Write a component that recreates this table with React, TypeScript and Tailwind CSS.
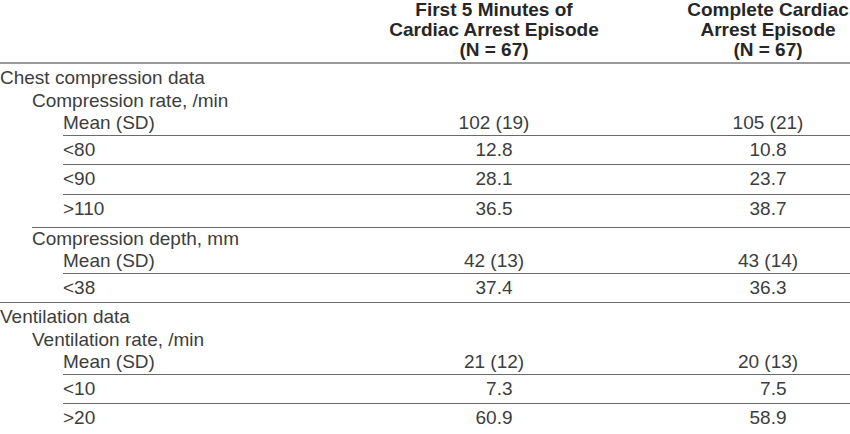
import React from "react";

type DataRow = { label: string; a: string; b: string };
type Subsection = { title: string; mean: DataRow; rows: DataRow[] };
type Section = { title: string; subsections: Subsection[] };

const FS = "\u2007";

const sections: Section[] = [
  {
    title: "Chest compression data",
    subsections: [
      {
        title: "Compression rate, /min",
        mean: { label: "Mean (SD)", a: "102 (19)", b: "105 (21)" },
        rows: [
          { label: "<80", a: "12.8", b: "10.8" },
          { label: "<90", a: "28.1", b: "23.7" },
          { label: ">110", a: "36.5", b: "38.7" },
        ],
      },
      {
        title: "Compression depth, mm",
        mean: { label: "Mean (SD)", a: "42 (13)", b: "43 (14)" },
        rows: [{ label: "<38", a: "37.4", b: "36.3" }],
      },
    ],
  },
  {
    title: "Ventilation data",
    subsections: [
      {
        title: "Ventilation rate, /min",
        mean: { label: "Mean (SD)", a: "21 (12)", b: "20 (13)" },
        rows: [
          { label: "<10", a: FS + "7.3", b: FS + "7.5" },
          { label: ">20", a: "60.9", b: "58.9" },
        ],
      },
    ],
  },
];

// label column + two value columns, the gap between them is a fixed spacer
const Cells = ({ label, a, b }: DataRow) => (
  <>
    <div className="flex-1 whitespace-nowrap">{label}</div>
    <div className="w-[210px] text-center whitespace-nowrap">{a}</div>
    <div className="w-[87px]" />
    <div className="w-[164px] text-center whitespace-nowrap">{b}</div>
  </>
);

export default function App() {
  return (
    <div
      className="w-[850px] h-[434px] overflow-hidden bg-white text-[19px] text-[#3d3d3d]"
      style={{ fontFamily: '"Liberation Sans", Arial, sans-serif' }}
    >
      {/* Column headings */}
      <div className="flex h-[64px] flex-col justify-end border-b-2 border-[#9a9a9a] pb-[2px]">
        <div className="flex font-bold leading-[20px] text-[#262626]">
          <div className="flex-1" />
          <div className="w-[210px] text-center whitespace-nowrap">
            First 5 Minutes of
            <br />
            Cardiac Arrest Episode
            <br />
            (N = 67)
          </div>
          <div className="w-[87px]" />
          <div className="w-[164px] text-center whitespace-nowrap">
            Complete Cardiac
            <br />
            Arrest Episode
            <br />
            (N = 67)
          </div>
        </div>
      </div>

      {sections.map((section, si) => (
        <div
          key={section.title}
          className={`pt-[3px] ${si < sections.length - 1 ? "border-b-[1.5px] border-[#6a6a6a]" : ""}`}
        >
          <div className="leading-[22.5px]">{section.title}</div>
          {section.subsections.map((sub, i) => {
            const last = i === section.subsections.length - 1;
            return (
              <div
                key={sub.title}
                className={`ml-[32px] ${last ? "" : "border-b-[1.5px] border-[#6a6a6a] pb-[3.5px]"}`}
              >
                <div className="leading-[22.5px]">{sub.title}</div>
                <div className="ml-[31px] flex leading-[22.5px]">
                  <Cells {...sub.mean} />
                </div>
                {sub.rows.map((row) => (
                  <div
                    key={row.label}
                    className="ml-[31px] flex h-[29.5px] items-center border-t-[1.5px] border-[#6a6a6a] leading-[28px]"
                  >
                    <Cells {...row} />
                  </div>
                ))}
              </div>
            );
          })}
        </div>
      ))}
    </div>
  );
}
